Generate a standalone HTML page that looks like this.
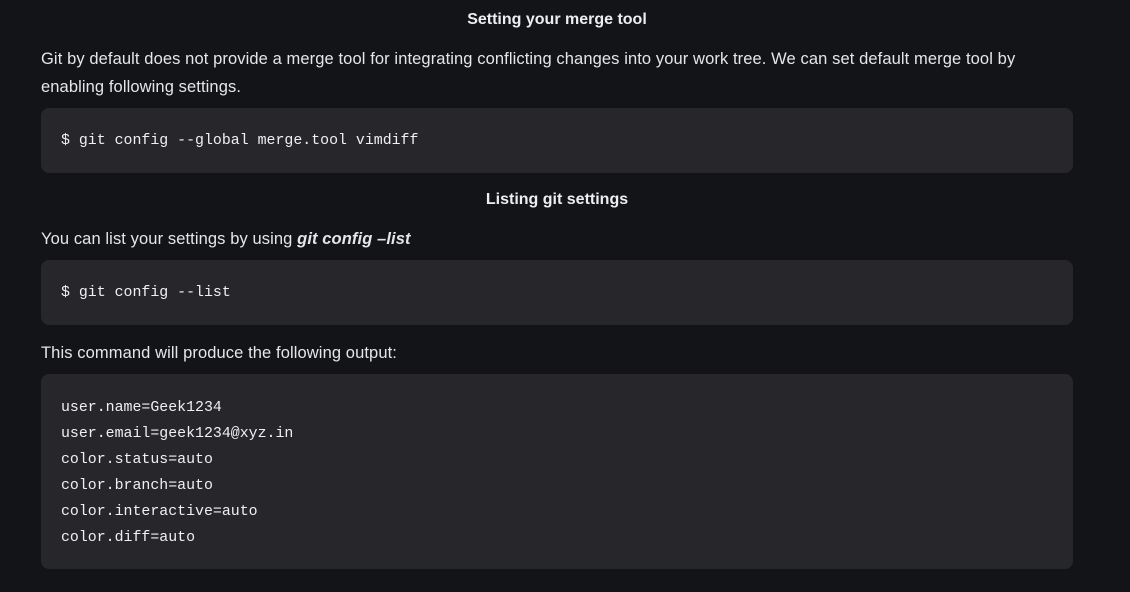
<!DOCTYPE html>
<html><head><style>
body{margin:0;background:#131417;color:#eeeef0;font-family:"Liberation Sans",sans-serif;width:1130px;height:592px;overflow:hidden;position:relative}
h{position:absolute;left:0;width:1114px;text-align:center;font-weight:bold;font-size:16px}
p{position:absolute;left:41px;margin:0;font-size:16.5px;line-height:28px;width:1012px;color:#e6e6e8;letter-spacing:0.1px}
.c{position:absolute;left:41px;width:1032px;background:#27272b;border-radius:8px}
pre{margin:0;position:absolute;left:20px;font-family:"Liberation Mono",monospace;font-size:14.9px;color:#f0f0f0;line-height:26px}
</style></head><body>
<h style="top:11px">Setting your merge tool</h>
<p style="top:45px">Git by default does not provide a merge tool for integrating conflicting changes into your work tree. We can set default merge tool by enabling following settings.</p>
<div class="c" style="top:108px;height:65px"><pre style="top:20px">$ git config --global merge.tool vimdiff</pre></div>
<h style="top:191px">Listing git settings</h>
<p style="top:225px">You can list your settings by using <b><i>git config –list</i></b></p>
<div class="c" style="top:260px;height:65px"><pre style="top:20px">$ git config --list</pre></div>
<p style="top:339px">This command will produce the following output:</p>
<div class="c" style="top:374px;height:195px"><pre style="top:21px">user.name=Geek1234
user.email=geek1234@xyz.in
color.status=auto
color.branch=auto
color.interactive=auto
color.diff=auto</pre></div>
</body></html>
